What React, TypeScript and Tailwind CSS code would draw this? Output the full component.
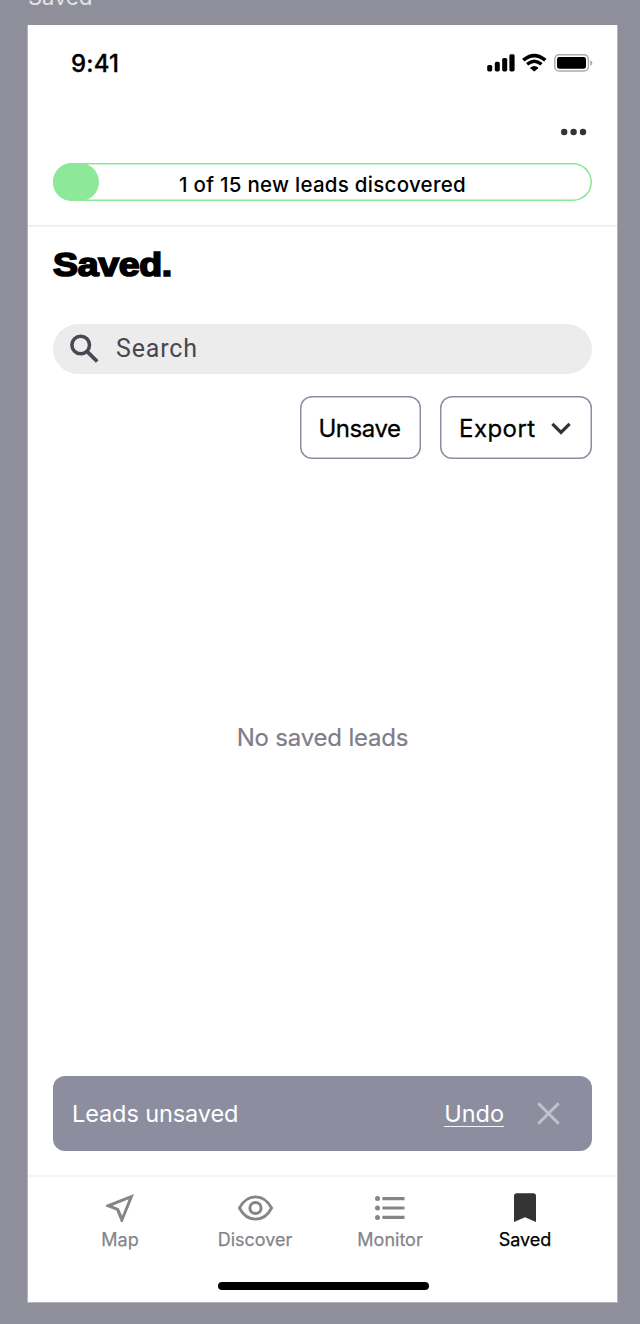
import type { ReactNode } from 'react';

function StatusIcons() {
  return (
    <svg width="108" height="22" viewBox="486 52 108 22" fill="none">
      <g fill="#000">
        <rect x="487.2" y="65" width="5" height="6.4" rx="1.6" />
        <rect x="494.8" y="61.8" width="5" height="9.6" rx="1.6" />
        <rect x="502.2" y="58" width="5" height="13.4" rx="1.6" />
        <rect x="509.4" y="54.2" width="5.2" height="17.2" rx="1.6" />
        <path d="M530.4 67.6Q534.3 64.6 538.2 67.6Q538.4 67.9 538.1 68.3L534.8 71.2Q534.3 71.5 533.8 71.2L530.5 68.3Q530.2 67.9 530.4 67.6Z" />
      </g>
      <path d="M523.3 60.2Q534.3 50.9 545.3 60.2" stroke="#000" strokeWidth="3.7" />
      <path d="M527.1 64.3Q534.3 58.2 541.5 64.3" stroke="#000" strokeWidth="3.4" />
      <rect x="554.8" y="54.7" width="33.6" height="16.4" rx="4.3" stroke="#adadad" strokeWidth="1.5" />
      <rect x="557" y="57" width="29" height="11.8" rx="2.4" fill="#000" />
      <path d="M590.2 60.2Q592.4 61 592.4 63T590.2 65.8Z" fill="#adadad" />
    </svg>
  );
}

function NavItem({ label, active, children }: { label: string; active?: boolean; children: ReactNode }) {
  return (
    <div className={`flex w-[135px] flex-col items-center ${active ? 'text-black' : 'text-[#858589]'}`}>
      <svg width="36" height="34" viewBox="0 0 36 34" fill="none">{children}</svg>
      <span className="mt-[2px] text-[18px] leading-[26px] [-webkit-text-stroke:0.25px_currentColor]">
        {label}
      </span>
    </div>
  );
}

export default function App() {
  return (
    <div className="h-[1324px] w-[640px] overflow-hidden bg-[#8e8f9b] font-['Inter',sans-serif] text-black">
      <div className="flex h-[25px] items-end pl-[28px]">
        <span className="mb-[14px] text-[22px] leading-[28px] text-[#e4e4e6]">Saved</span>
      </div>
      <main className="ml-[27px] flex h-[1278px] w-[591px] flex-col border-x border-b border-[#b3b3bd] bg-white">
        <header className="flex h-[200px] shrink-0 flex-col">
          <div className="flex h-[76px] items-center justify-between pr-[23px] pl-[43px]">
            <span className="pt-[1px] text-[24px] font-medium tracking-[0.2px] [-webkit-text-stroke:0.3px_#000]">9:41</span>
            <StatusIcons />
          </div>
          <div className="flex h-[62px] items-center justify-end pr-[29px]">
            <svg width="28" height="8" viewBox="0 0 28 8" fill="#333">
              <circle cx="4.2" cy="4" r="3.2" />
              <circle cx="13.6" cy="4" r="3.2" />
              <circle cx="23" cy="4" r="3.2" />
            </svg>
          </div>
          <div className="mx-[25px] grid h-[38px] grid-cols-1 rounded-full shadow-[inset_0_0_0_1.5px_#8be796]">
            <div className="col-start-1 row-start-1 h-[38px] w-[46px] rounded-[19px] bg-[#8de898]" />
            <span className="col-start-1 row-start-1 pt-[6px] text-center text-[20.5px] leading-[32px] font-medium tracking-[0.27px]">
              1 of 15 new leads discovered
            </span>
          </div>
        </header>
        <div className="h-[2px] shrink-0 border-t border-[#e9e9f1] bg-[#f7f7fa]" />

        <section className="flex flex-1 flex-col px-[25px]">
          <h1 className="mt-[16px] h-[44px] w-max origin-left scale-x-[1.12] font-['Liberation_Sans',sans-serif] text-[33.5px] leading-[44px] font-bold tracking-[-0.3px] [-webkit-text-stroke:1.7px_#000]">
            Saved.
          </h1>
          <div className="mt-[37px] flex h-[50px] shrink-0 items-center rounded-full bg-[#ececec] pl-[17px] font-['Roboto',sans-serif] text-[#49474f]">
            <svg width="30" height="30" viewBox="0 0 30 30" fill="none" stroke="currentColor" strokeWidth="3.5">
              <circle cx="10.7" cy="11" r="8.8" />
              <path d="M17 17.3L27.2 27.5" strokeWidth="3.8" />
            </svg>
            <span className="ml-[16px] text-[25px] tracking-[0.85px]">Search</span>
          </div>
          <div className="mt-[22px] flex h-[63px] shrink-0 justify-end gap-[19px] text-[24px]">
            <button className="w-[121px] rounded-[12px] pt-[2px] pr-[2px] tracking-[-0.45px] shadow-[inset_0_0_0_1.5px_#8c8ea0] [-webkit-text-stroke:0.3px_#000]">
              Unsave
            </button>
            <button className="flex w-[152px] items-center rounded-[12px] pt-[2px] pl-[19px] tracking-[0.45px] shadow-[inset_0_0_0_1.5px_#8c8ea0] [-webkit-text-stroke:0.3px_#000]">
              Export
              <svg className="ml-[15px]" width="20" height="14" viewBox="0 0 20 14" fill="none" stroke="#333" strokeWidth="3.2">
                <path d="M1.4 1.9L10 10.5L18.6 1.9" />
              </svg>
            </button>
          </div>
          <div className="flex flex-1 items-start justify-center pt-[263px] text-[24px] leading-[32px] tracking-[-0.2px] text-[#7f7d8a] [-webkit-text-stroke:0.2px_#7f7d8a]">
            No saved leads
          </div>
          <div className="mb-[24px] flex h-[75px] shrink-0 items-center rounded-[12px] bg-[#8c8ea0] pr-[32px] pl-[19px] text-[23.5px] text-white">
            <span className="tracking-[-0.1px]">Leads unsaved</span>
            <span className="ml-auto border-b border-white/90 leading-[25px]">Undo</span>
            <svg className="ml-[33px]" width="23" height="23" viewBox="0 0 23 23" stroke="#c0c1cb" strokeWidth="3">
              <path d="M1.3 1.3L21.7 21.7M21.7 1.3L1.3 21.7" />
            </svg>
          </div>
        </section>

        <div className="h-[2px] shrink-0 bg-[#f3f3f4]" />
        <nav className="flex h-[105px] shrink-0 justify-center pt-[14px]">
          <NavItem label="Map">
            <path
              d="M32 3L4 14V15.5L14.4 19.4L19 31H20.6ZM26.7 8.2L20.1 24.7L16.8 17.2L10.6 14.8Z"
              fill="currentColor"
              fillRule="evenodd"
            />
          </NavItem>
          <NavItem label="Discover">
            <path d="M2.4 17C10.3 2.1 26.8 2.1 34.6 17C26.8 31.9 10.3 31.9 2.4 17Z" stroke="currentColor" strokeWidth="2.8" strokeLinejoin="round" />
            <circle cx="18.5" cy="17" r="5.6" stroke="currentColor" strokeWidth="3" />
          </NavItem>
          <NavItem label="Monitor">
            <g fill="currentColor">
              <circle cx="5.5" cy="7.6" r="2.5" />
              <circle cx="5.5" cy="17" r="2.5" />
              <circle cx="5.5" cy="26.4" r="2.5" />
              <path d="M10.4 6H32.5V9.2H10.4ZM10.4 15.4H32.5V18.6H10.4ZM10.4 24.8H32.5V28H10.4Z" />
            </g>
          </NavItem>
          <NavItem label="Saved" active>
            <path d="M7 5Q7 2.3 9.7 2.3H26.3Q29 2.3 29 5V31L18 26.2L7 31Z" fill="#333" />
          </NavItem>
        </nav>
        <div className="mb-[12px] ml-[190px] h-[8px] w-[211px] shrink-0 rounded-full bg-black" />
      </main>
    </div>
  );
}
